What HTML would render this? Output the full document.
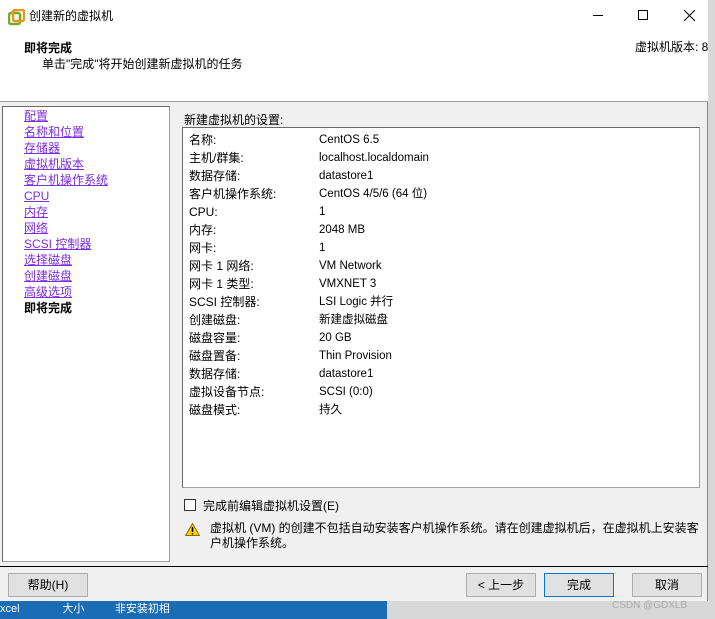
<!DOCTYPE html>
<html><head><meta charset="utf-8"><style>
*{margin:0;padding:0;box-sizing:border-box}
body{width:715px;height:619px;overflow:hidden;background:#d8d8d8;font-family:"Liberation Sans","Noto Sans CJK SC",sans-serif;font-size:12px;line-height:16px;color:#000;position:relative}
.a{position:absolute;white-space:nowrap}
.win{left:0;top:0;width:708px;height:601px;background:#f0f0f0;border-right:1px solid #888}
.nav div{position:absolute;left:24px;color:#7b2ee0;text-decoration:underline;font-size:12px;white-space:nowrap}
.row{position:absolute;white-space:nowrap}
.btn{position:absolute;height:24px;border:1px solid #adadad;background:#e1e1e1;text-align:center;line-height:22px;font-size:12px}
</style></head><body>
<div class="a win">
 <div class="a" style="left:0;top:0;width:708px;height:102px;background:#fff;border-bottom:1px solid #a0a0a0"></div>
 <svg class="a" style="left:8px;top:9px" width="17" height="17" viewBox="0 0 17 17"><rect x="1" y="4" width="11" height="11" rx="2" fill="none" stroke="#7aa82a" stroke-width="2.5"/><rect x="5" y="1" width="11" height="11" rx="2" fill="none" stroke="#e59a1a" stroke-width="2.5"/></svg>
 <div class="a" style="left:29px;top:8px;font-size:12px">创建新的虚拟机</div>
 <div class="a" style="left:593px;top:15px;width:10px;border-top:1px solid #000"></div>
 <div class="a" style="left:638px;top:10px;width:10px;height:10px;border:1px solid #000"></div>
 <svg class="a" style="left:684px;top:10px" width="11" height="11"><path d="M0 0L11 11M11 0L0 11" stroke="#000" stroke-width="1"/></svg>
 <div class="a" style="left:24px;top:40px;font-weight:bold">即将完成</div>
 <div class="a" style="left:42px;top:56px">单击"完成"将开始创建新虚拟机的任务</div>
 <div class="a" style="left:635px;top:39px">虚拟机版本: 8</div>
 <div class="a" style="left:2px;top:106px;width:168px;height:456px;background:#fff;border:1px solid #a0a0a0;border-top-color:#696969;border-left-color:#696969"></div>
 <div class="nav">
  <div style="top:108px">配置</div><div style="top:124px">名称和位置</div><div style="top:140px">存储器</div><div style="top:156px">虚拟机版本</div><div style="top:172px">客户机操作系统</div><div style="top:188px">CPU</div><div style="top:204px">内存</div><div style="top:220px">网络</div><div style="top:236px">SCSI 控制器</div><div style="top:252px">选择磁盘</div><div style="top:268px">创建磁盘</div><div style="top:284px">高级选项</div>
  <div style="top:300px;color:#000;text-decoration:none;font-weight:bold">即将完成</div>
 </div>
 <div class="a" style="left:184px;top:112px">新建虚拟机的设置:</div>
 <div class="a" style="left:182px;top:127px;width:518px;height:361px;background:#fff;border:1px solid #a0a0a0;border-top-color:#696969;border-left-color:#696969"></div>
 <div class="row" style="left:189px;top:131px;line-height:18px">名称:<br>主机/群集:<br>数据存储:<br>客户机操作系统:<br>CPU:<br>内存:<br>网卡:<br>网卡 1 网络:<br>网卡 1 类型:<br>SCSI 控制器:<br>创建磁盘:<br>磁盘容量:<br>磁盘置备:<br>数据存储:<br>虚拟设备节点:<br>磁盘模式:</div>
 <div class="row" style="left:319px;top:131px;line-height:18px;font-size:11.5px">CentOS 6.5<br>localhost.localdomain<br>datastore1<br>CentOS 4/5/6 (64 位)<br>1<br>2048 MB<br>1<br>VM Network<br>VMXNET 3<br>LSI Logic 并行<br>新建虚拟磁盘<br>20 GB<br>Thin Provision<br>datastore1<br>SCSI (0:0)<br>持久</div>
 <div class="a" style="left:184px;top:499px;width:12px;height:12px;border:1px solid #333;background:#fff"></div>
 <div class="a" style="left:203px;top:498px">完成前编辑虚拟机设置(E)</div>
 <svg class="a" style="left:185px;top:523px" width="15" height="13"><path d="M7.5 0.5L14.5 12.5H0.5Z" fill="#f5d000" stroke="#8a6d00"/><path d="M7.5 4V9M7.5 10.2V11.5" stroke="#000" stroke-width="1.5"/></svg>
 <div class="a" style="left:210px;top:521px;width:500px;line-height:15px;white-space:normal">虚拟机 (VM) 的创建不包括自动安装客户机操作系统。请在创建虚拟机后，在虚拟机上安装客<br>户机操作系统。</div>
 <div class="a" style="left:0;top:566px;width:708px;border-top:1px solid #000"></div>
 <div class="btn" style="left:8px;top:573px;width:80px">帮助(H)</div>
 <div class="btn" style="left:466px;top:573px;width:70px">&lt; 上一步</div>
 <div class="btn" style="left:544px;top:573px;width:70px;border:1px solid #0078d7">完成</div>
 <div class="btn" style="left:632px;top:573px;width:70px">取消</div>
 <div class="a" style="left:612px;top:598px;color:#aaa;font-size:10px">CSDN @GDXLB</div>
</div>
<div class="a" style="left:0;top:601px;width:387px;height:18px;background:#1a6cb5"></div>
<div class="a" style="left:0;top:601px;color:#fff;font-size:11px">xcel&nbsp;&nbsp;&nbsp;&nbsp;&nbsp;&nbsp;&nbsp;&nbsp;&nbsp;&nbsp;&nbsp;&nbsp;&nbsp;&nbsp;大小&nbsp;&nbsp;&nbsp;&nbsp;&nbsp;&nbsp;&nbsp;&nbsp;&nbsp;&nbsp;非安装初相</div>
</body></html>
